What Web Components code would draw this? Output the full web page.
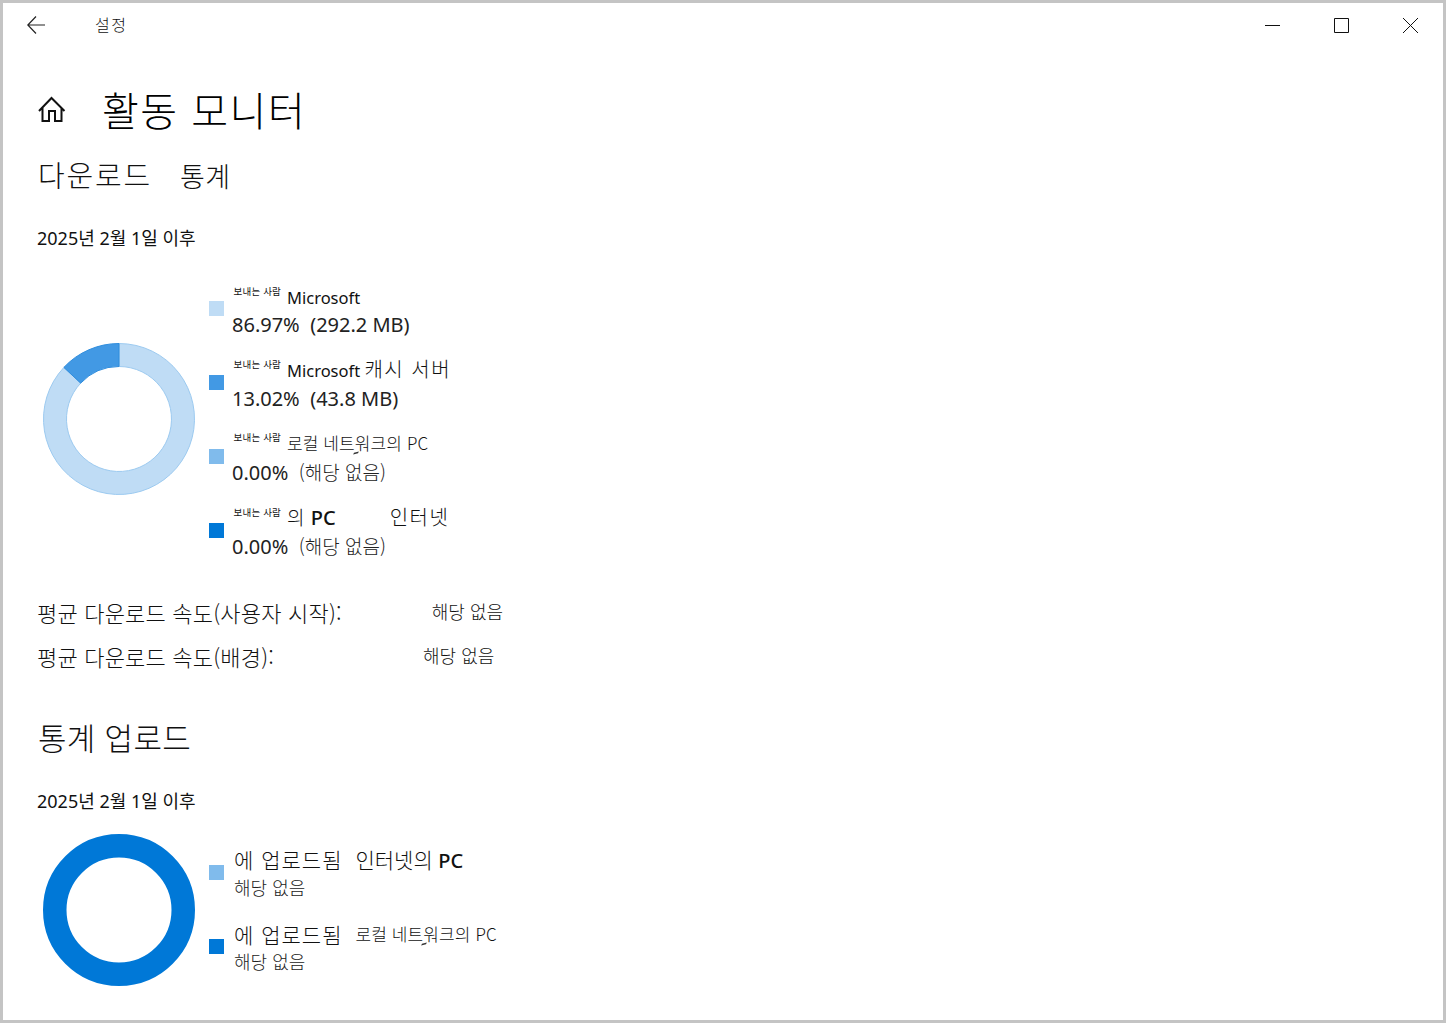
<!DOCTYPE html>
<html lang="ko">
<head>
<meta charset="utf-8">
<title>설정</title>
<style>
  html, body { margin: 0; background: #fff; }
  body { font-family: "Noto Sans", "Noto Sans CJK KR", sans-serif; color: #111; }
  .k { font-family: "Noto Sans CJK KR", sans-serif; font-weight: 300; }
  .k20 { font-size: 20px; letter-spacing: 1.5px; }
  .k17 { font-size: 17px; letter-spacing: .1px; }
  .k19 { font-size: 19px; }
  .pc { font-weight: 500; font-size: 20px; }
</style>
</head>
<body>
<settings-window>
  <title-bar label="설정"></title-bar>
  <page-heading>활동 모니터</page-heading>

  <section-title top="20"><span style="font-size:29px;letter-spacing:1.8px">다운로드</span><span style="margin-left:28px;font-size:27px;letter-spacing:.5px">통계</span></section-title>
  <date-line top="30">2025년 2월 1일 이후</date-line>
  <chart-row top="34" donut-top="59">
    <donut-chart slot="chart" segments="86.97:#bfdcf5:#9ccaf0,13.03:#4299e4:#2f8ddd"></donut-chart>
    <legend-item color="#bfdcf5"><small-tag></small-tag>Microsoft<span slot="sub">86.97%&nbsp; (292.2 MB)</span></legend-item>
    <legend-item color="#4299e4" lift><small-tag></small-tag>Microsoft <span class="k k20">캐시 서버</span><span slot="sub">13.02%&nbsp; (43.8 MB)</span></legend-item>
    <legend-item color="#80bbec" lift tight><small-tag></small-tag><span class="k k17">로컬 네트<tick-mark></tick-mark>워크의 PC</span><span slot="sub">0.00%&nbsp; <span class="k k19">(해당 없음)</span></span></legend-item>
    <legend-item color="#0078d7" lift tight><small-tag></small-tag><span class="k k19">의</span> <b class="pc" style="margin-left:2px">PC</b><span class="k k20" style="margin-left:54px">인터넷</span><span slot="sub">0.00%&nbsp; <span class="k k19">(해당 없음)</span></span></legend-item>
  </chart-row>

  <stat-line top="16" gap="90">평균 다운로드 속도(사용자 시작):</stat-line>
  <stat-line top="12" gap="149">평균 다운로드 속도(배경):</stat-line>

  <section-title top="45" size="31">통계 업로드</section-title>
  <date-line top="32">2025년 2월 1일 이후</date-line>
  <chart-row top="21" donut-top="0" legend-top="12">
    <donut-chart slot="chart" segments="100:#0078d7:#0078d7"></donut-chart>
    <legend-item color="#80bbec" flat><span class="k" style="letter-spacing:1px">에 업로드됨</span><span class="k" style="margin-left:13px">인터넷의</span> <b class="pc">PC</b><span slot="sub" class="k" style="font-size:18px">해당 없음</span></legend-item>
    <legend-item color="#0078d7" flat><span class="k" style="letter-spacing:1px">에 업로드됨</span><span class="k k17" style="margin-left:13px;vertical-align:2px">로컬 네트<tick-mark></tick-mark>워크의 PC</span><span slot="sub" class="k" style="font-size:18px">해당 없음</span></legend-item>
  </chart-row>
</settings-window>

<script>
const define = (name, css, html, extra) => {
  customElements.define(name, class extends HTMLElement {
    constructor() {
      super();
      this.attachShadow({ mode: 'open' }).innerHTML = `<style>${css}</style>${html}`;
    }
    connectedCallback() { if (extra) extra(this); }
  });
};

const kr = '"Noto Sans CJK KR", sans-serif';

define('settings-window', `
  :host { display:block; box-sizing:border-box; height:1023px; border:3px solid #c4c4c4; overflow:hidden; background:#fff; }
`, `<slot></slot>`);

define('title-bar', `
  :host { display:flex; align-items:center; height:44px; color:#111; }
  .back { margin-left:24px; width:18px; height:18px; display:block; }
  .name { margin-left:50px; font:300 16px ${kr}; letter-spacing:1.5px; position:relative; top:-1px; }
  .ctl { margin-left:auto; display:flex; gap:54px; margin-right:25px; }
  svg { display:block; }
`, `
  <svg class="back" viewBox="0 0 18 18" fill="none" stroke="#222" stroke-width="1.2"><path d="M9 .5 .8 9 9 17.5M.8 9H18"/></svg>
  <span class="name"></span>
  <span class="ctl">
    <svg width="15" height="15" viewBox="0 0 15 15" fill="none" stroke="#111"><path d="M0 7.5h15"/></svg>
    <svg width="15" height="15" viewBox="0 0 15 15" fill="none" stroke="#111"><path d="M.5.5h14v14H.5z"/></svg>
    <svg width="15" height="15" viewBox="0 0 15 15" fill="none" stroke="#111"><path d="M0 0l15 15M15 0 0 15"/></svg>
  </span>
`, el => { el.shadowRoot.querySelector('.name').textContent = el.getAttribute('label'); });

define('page-heading', `
  :host { display:flex; align-items:center; height:50px; margin-top:37px; padding-left:35px; }
  svg { display:block; }
  .t { margin-left:36px; font:300 40px/50px ${kr}; letter-spacing:1.5px; color:#000; white-space:pre; }
`, `
  <svg width="28" height="26" viewBox="0 0 28 26" fill="none" stroke="#111" stroke-width="2"><path d="M1 15 13.500 2 26.500 15M4.500 12V25H11V15H17V25H23.500V12"/></svg>
  <span class="t"><slot></slot></span>
`);

define('section-title', `
  :host { display:block; padding-left:35px; font:300 28px/40px ${kr}; letter-spacing:.3px; color:#111; }
`, `<slot></slot>`, el => {
  el.style.marginTop = el.getAttribute('top') + 'px';
  if (el.hasAttribute('size')) el.style.fontSize = el.getAttribute('size') + 'px';
});

define('date-line', `
  :host { display:block; padding-left:34px; font:400 18px/24px "Noto Sans", ${kr}; color:#111; }
`, `<slot></slot>`, el => { el.style.marginTop = el.getAttribute('top') + 'px'; });

define('chart-row', `
  :host { display:flex; padding-left:40px; }
  .c { width:166px; flex:none; }
  .r { display:grid; grid-auto-rows:74px; }
`, `
  <div class="c"><slot name="chart"></slot></div>
  <div class="r"><slot></slot></div>
`, el => {
  el.style.marginTop = el.getAttribute('top') + 'px';
  el.shadowRoot.querySelector('.c').style.paddingTop = el.getAttribute('donut-top') + 'px';
  el.shadowRoot.querySelector('.r').style.paddingTop = (el.getAttribute('legend-top') || 0) + 'px';
});

define('donut-chart', `
  :host { display:block; width:152px; height:152px; }
  svg { display:block; }
`, `<svg width="152" height="152" viewBox="0 0 152 152"></svg>`, el => {
  const svg = el.shadowRoot.querySelector('svg');
  const R = 75.5, r = 52.5, c = 76;
  const pt = (rad, a) => [c + rad * Math.sin(a), c - rad * Math.cos(a)].map(n => n.toFixed(2)).join(' ');
  let start = 0, out = '';
  for (const seg of el.getAttribute('segments').split(',')) {
    const [pct, fill, line] = seg.split(':');
    if (+pct >= 100) {
      out += `<circle cx="${c}" cy="${c}" r="${(R + r) / 2 + .25}" fill="none" stroke="${fill}" stroke-width="${R - r + .5}"/>`;
      continue;
    }
    const end = start + pct / 100 * Math.PI * 2;
    const big = end - start > Math.PI ? 1 : 0;
    out += `<path d="M${pt(R, start)}A${R} ${R} 0 ${big} 1 ${pt(R, end)}L${pt(r, end)}A${r} ${r} 0 ${big} 0 ${pt(r, start)}Z" fill="${fill}" stroke="${line}"/>`;
    start = end;
  }
  svg.innerHTML = out;
});

define('small-tag', `
  :host { display:inline-block; width:53.500px; padding-left:1.500px; font:400 9.500px/8px ${kr}; letter-spacing:.2px; color:#111; vertical-align:9px; white-space:nowrap; }
`, `보내는 사람`);

define('tick-mark', `
  :host { display:inline-block; position:relative; width:0; height:0; }
  i { position:absolute; left:-1px; top:2px; width:4px; height:2px; background:#333; transform:skewX(-40deg) rotate(-20deg); }
`, `<i></i>`);

define('legend-item', `
  :host { display:flex; align-items:flex-start; height:74px; white-space:nowrap; }
  .sw { width:15px; height:15px; flex:none; margin-top:17px; }
  .t { margin-left:8px; }
  .l { font:400 16.500px/27px "Noto Sans", ${kr}; color:#111; height:27px; }
  .s { font:400 20px/27px "Noto Sans", ${kr}; color:#222; }
  :host([lift]) .l { margin-top:-3px; margin-bottom:3px; }
  :host([tight]) .s { margin-top:-1px; }
  :host([flat]) .t { margin-left:10px; }
  :host([flat]) .sw { margin-top:19px; }
  :host([flat]) .l { font-size:21px; height:28px; }
`, `
  <span class="sw"></span>
  <div class="t">
    <div class="l"><slot></slot></div>
    <div class="s"><slot name="sub"></slot></div>
  </div>
`, el => { el.shadowRoot.querySelector('.sw').style.background = el.getAttribute('color'); });

define('stat-line', `
  :host { display:flex; padding-left:34px; height:32px; align-items:center; white-space:nowrap; }
  .a { font:300 22px ${kr}; letter-spacing:.2px; color:#111; }
  .b { font:300 18px ${kr}; color:#111; position:relative; top:-1px; }
`, `<span class="a"><slot></slot></span><span class="b">해당 없음</span>`, el => {
  el.style.marginTop = el.getAttribute('top') + 'px';
  el.shadowRoot.querySelector('.b').style.marginLeft = el.getAttribute('gap') + 'px';
});
</script>
</body>
</html>
